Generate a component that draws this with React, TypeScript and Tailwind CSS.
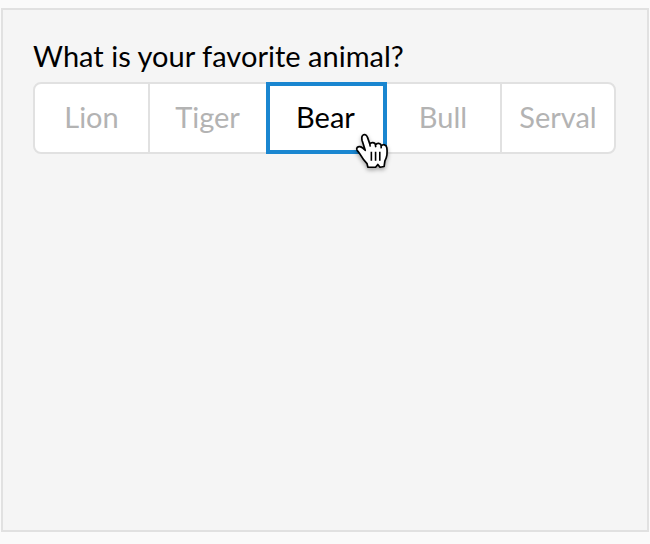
const label = "flex items-center justify-center pb-[3px]";

function HandCursor() {
  return (
    <svg
      className="absolute left-[82px] top-[42px] z-10 overflow-visible drop-shadow-[0_2px_2px_rgba(0,0,0,0.35)]"
      width="41"
      height="43"
      viewBox="0 0 36 38"
      preserveAspectRatio="none"
    >
      <path
        d="M13.5 34.5 L12.8 31.5 C10.5 29 8.5 26.5 7.2 24 C5.8 21.5 4.6 20.6 4 19.5 C3.2 17.6 4.6 16.2 6.5 16.4 C8.3 16.6 9.8 18.1 11.2 19.7 L8.4 10.8 C7.9 8.3 8.4 6.6 9.8 6 C11.4 5.4 12.6 6.5 13.3 8.5 L15.3 14.3 C16 12.5 19.6 12.1 20.3 14.9 C21.6 12.8 24.8 13.1 25.3 15.8 C26.6 14.2 29.8 14.4 30.2 17.5 C30.8 21.5 30.7 25 28.5 29 L27.8 34 L24.2 34.7 L22.3 32.2 L20.3 34.7 Z"
        transform="translate(0.4 0)"
        fill="white"
        stroke="black"
        strokeWidth="1.5"
        strokeLinejoin="round"
      />
      <path d="M17 21v8M20.7 21v8M24.4 21v8M15.6 14.5l.5 2M20.5 15l.4 2M25.5 16l.2 2" stroke="black" strokeWidth="1.4" />
    </svg>
  );
}

export default function App() {
  return (
    <div className="h-[544px] w-[650px] bg-[#fafafa] pl-px pt-2 font-['Lato',sans-serif]">
      <main className="h-[524px] w-[648px] border-2 border-[#e1e1e1] bg-[#f5f5f5] pl-[30px] pt-[29px]">
        <h1 className="h-[43px] whitespace-nowrap text-[29px] leading-[34px] tracking-[0.02px] text-black">What is your favorite animal?</h1>
        <div className="flex h-[72px] w-[583px] rounded-[8px] border-2 border-[#e1e1e1] bg-white text-[29px] text-[#b3b3b3]">
          <div className={`${label} w-[115px] border-r-2 border-[#e1e1e1]`}>Lion</div>
          <div className={`${label} w-[116px] pr-px`}>Tiger</div>
          <div className={`${label} relative -my-[2px] w-[121px] border-4 border-[#1a86d0] pr-0.5 text-black`}>
            Bear
            <HandCursor />
          </div>
          <div className={`${label} w-[115px] border-r-2 border-[#e1e1e1] pr-px`}>Bull</div>
          <div className={`${label} flex-1`}>Serval</div>
        </div>
      </main>
    </div>
  );
}
